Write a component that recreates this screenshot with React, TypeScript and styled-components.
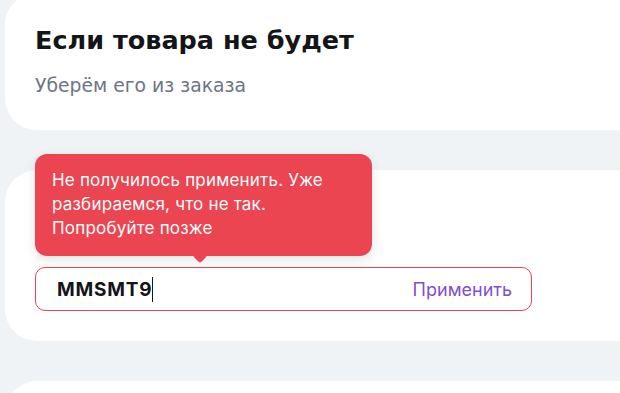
import { FC } from 'react';
import styled, { createGlobalStyle } from 'styled-components';

const GlobalStyle = createGlobalStyle`
    body {
        margin: 0;
        background: #f0f3f6;
        font-family: Inter, "Noto Sans", sans-serif;
        overflow: hidden;
    }
`;

const Page = styled.div`
    display: flex;
    flex-direction: column;
    gap: 40px;
    padding-left: 5px;
    margin-top: -7px;
    height: 400px;
    overflow: hidden;
`;

const Card = styled.section<{ $top?: number; $bottom?: number }>`
    position: relative;
    flex-shrink: 0;
    margin-right: -40px;
    padding: ${p => p.$top ?? 30}px 30px ${p => p.$bottom ?? 30}px;
    background: #ffffff;
    border-radius: 32px;
`;

const Title = styled.h2`
    margin: 0;
    font-family: "DejaVu Sans", Inter, sans-serif;
    font-size: 25.5px;
    line-height: 32px;
    font-weight: 700;
    color: #131518;
`;

const Subtitle = styled.p`
    margin: 19px 0 0;
    font-family: "DejaVu Sans", Inter, sans-serif;
    font-size: 18.8px;
    line-height: 22px;
    color: #6d7584;
`;

const Field = styled.div`
    position: relative;
    display: flex;
    align-items: center;
    justify-content: space-between;
    box-sizing: border-box;
    width: 497px;
    height: 44px;
    padding: 0 19px 0 21px;
    border: 1px solid #ea4651;
    border-radius: 10px;
`;

const Value = styled.div`
    display: flex;
    align-items: center;
    font-size: 19px;
    font-weight: 700;
    color: #131518;
    letter-spacing: 0.8px;
`;

const Caret = styled.span`
    width: 1px;
    height: 25px;
    background: #131518;
`;

const ApplyButton = styled.button`
    padding: 0;
    border: 0;
    background: transparent;
    font-family: inherit;
    font-size: 18px;
    color: #7f4fd3;
    cursor: pointer;
`;

const Tooltip = styled.div`
    position: absolute;
    left: -1px;
    bottom: calc(100% + 12px);
    box-sizing: border-box;
    width: 337px;
    padding: 14px 16px 16px 17px;
    background: #ea4551;
    border-radius: 12px;
    box-shadow: 0 4px 12px rgba(30, 35, 45, 0.12);
    color: #ffffff;
    font-size: 17px;
    line-height: 24px;
    letter-spacing: 0.2px;

    &::after {
        content: '';
        position: absolute;
        left: 160px;
        bottom: -5px;
        width: 10px;
        height: 10px;
        background: #ea4551;
        transform: rotate(45deg);
        border-radius: 2px;
    }
`;

const App: FC = () => {
    return (
        <>
            <GlobalStyle />
            <Page>
                <Card $top={31} $bottom={33}>
                    <Title>Если товара не будет</Title>
                    <Subtitle>Уберём его из заказа</Subtitle>
                </Card>
                <Card $top={97} $bottom={30}>
                    <Field>
                        <Tooltip>
                            Не получилось применить. Уже разбираемся, что не так. Попробуйте позже
                        </Tooltip>
                        <Value>
                            MMSMT9
                            <Caret />
                        </Value>
                        <ApplyButton>Применить</ApplyButton>
                    </Field>
                </Card>
                <Card>
                    <Title>&nbsp;</Title>
                </Card>
            </Page>
        </>
    );
};

export default App;
